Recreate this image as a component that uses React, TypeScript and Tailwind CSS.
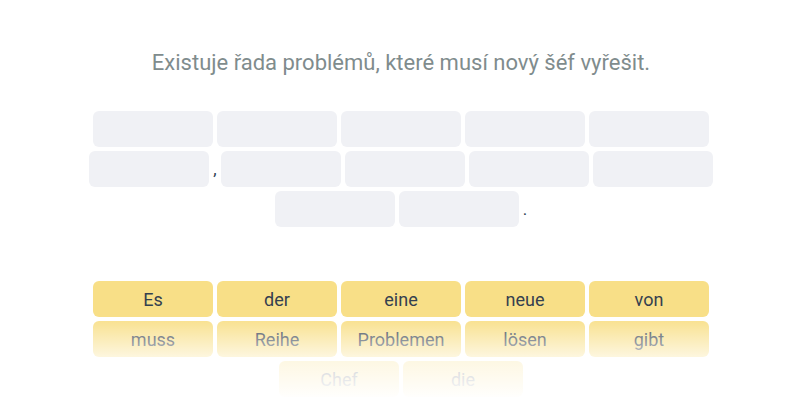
const slots: (string | null)[] = [
  null, null, null, null, null,
  null, ',', null, null, null, null,
  null, null, '.',
]

const words = [
  'Es', 'der', 'eine', 'neue', 'von',
  'muss', 'Reihe', 'Problemen', 'lösen', 'gibt',
  'Chef', 'die',
]

export default function App() {
  return (
    <div className="relative h-[400px] w-[800px] overflow-hidden bg-white font-['Roboto',sans-serif]">
      <div className="flex flex-col items-center pl-[2px] pt-[48px]">
        <p className="text-[22px] leading-[30px] text-[#7f8c8d]">
          Existuje řada problémů, které musí nový šéf vyřešit.
        </p>

        <div className="mt-[33px] flex w-[640px] flex-wrap justify-center gap-1">
          {slots.map((s, i) =>
            s === null ? (
              <div key={i} className="h-9 w-[120px] rounded-md bg-[#f0f1f5]" />
            ) : (
              <span key={i} className="self-center text-[17px] leading-6 text-[#2c3e50]">
                {s}
              </span>
            )
          )}
        </div>

        <div className="mt-[54px] flex w-[640px] flex-wrap justify-center gap-1">
          {words.map((w) => (
            <button
              key={w}
              className="flex h-9 w-[120px] items-center justify-center rounded-md bg-[#f8df87] text-[18px] text-[#34404f]"
            >
              {w}
            </button>
          ))}
        </div>
      </div>

      <div className="pointer-events-none absolute inset-x-0 top-[316px] h-[84px] bg-gradient-to-b from-white/0 via-white/75 to-white" />
    </div>
  )
}
